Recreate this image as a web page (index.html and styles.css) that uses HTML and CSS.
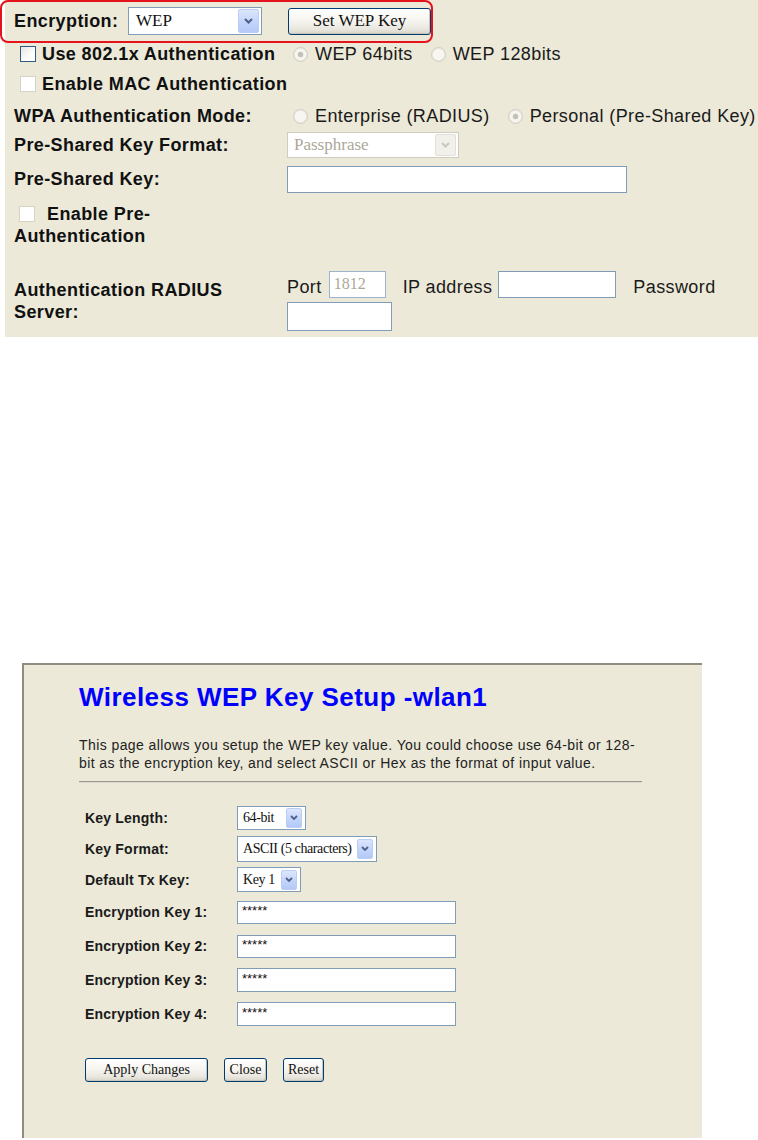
FILE: index.html
```html
<!DOCTYPE html>
<html lang="en">
<head>
<meta charset="utf-8">
<title>Wireless WEP Key Setup</title>
<link rel="stylesheet" href="styles.css">
</head>
<body>
<div class="page">
  <section class="sec-panel">
    <div class="row row-enc">
      <span class="lbl lbl-enc">Encryption:</span>
      <div class="sel sel-enc">
        <span class="sel-val">WEP</span>
        <span class="sel-btn"><svg width="9" height="6" viewBox="0 0 9 6"><path d="M1 1 L4.5 4.5 L8 1" fill="none" stroke="#4D6185" stroke-width="2"/></svg></span>
      </div>
      <button class="xpbtn btn-setkey" type="button">Set WEP Key</button>
    </div>

    <div class="grid2 row-8021x">
      <div class="cell-chk"><span class="chk chk-on"></span><span class="lbl">Use 802.1x Authentication</span></div>
      <div class="cell-ctl">
        <span class="radio checked"></span><span class="opt">WEP 64bits</span>
        <span class="radio radio-next"></span><span class="opt">WEP 128bits</span>
      </div>
    </div>

    <div class="row row-mac">
      <div class="cell-chk"><span class="chk"></span><span class="lbl">Enable MAC Authentication</span></div>
    </div>

    <div class="grid2 row-wpa">
      <span class="lbl">WPA Authentication Mode:</span>
      <div class="cell-ctl">
        <span class="radio"></span><span class="opt">Enterprise (RADIUS)</span>
        <span class="radio radio-next checked"></span><span class="opt">Personal (Pre-Shared Key)</span>
      </div>
    </div>

    <div class="grid2 row-pskfmt">
      <span class="lbl">Pre-Shared Key Format:</span>
      <div class="cell-ctl">
        <div class="sel sel-dis sel-fmt">
          <span class="sel-val">Passphrase</span>
          <span class="sel-btn"><svg width="9" height="6" viewBox="0 0 9 6"><path d="M1 1 L4.5 4.5 L8 1" fill="none" stroke="#C9C7BA" stroke-width="2"/></svg></span>
        </div>
      </div>
    </div>

    <div class="grid2 row-psk">
      <span class="lbl">Pre-Shared Key:</span>
      <div class="cell-ctl"><input class="txt txt-psk" type="text"></div>
    </div>

    <div class="row row-preauth">
      <div class="preauth lbl"><span class="chk chk-inline"></span>Enable Pre-Authentication</div>
    </div>

    <div class="grid2 row-radius">
      <span class="lbl lbl-radius">Authentication RADIUS Server:</span>
      <div class="radius-ctl">
        <span class="opt ctl-text">Port</span>
        <input class="txt txt-port" type="text" value="1812">
        <span class="opt ctl-text ctl-ip">IP address</span>
        <input class="txt txt-ip" type="text">
        <span class="opt ctl-text ctl-pw">Password</span>
        <input class="txt txt-pw" type="text">
      </div>
    </div>
  </section>

  <div class="annot"></div>

  <section class="wep-panel">
    <h1 class="wep-title">Wireless WEP Key Setup -wlan1</h1>
    <p class="wep-desc">This page allows you setup the WEP key value. You could choose use 64-bit or 128-bit as the encryption key, and select ASCII or Hex as the format of input value.</p>
    <div class="wep-rule"></div>

    <div class="wep-form">
      <span class="flbl">Key Length:</span>
      <div class="sel sel-sm sel-len">
        <span class="sel-val">64-bit</span>
        <span class="sel-btn"><svg width="8" height="5" viewBox="0 0 8 5"><path d="M1 1 L4 4 L7 1" fill="none" stroke="#4D6185" stroke-width="1.8"/></svg></span>
      </div>

      <span class="flbl">Key Format:</span>
      <div class="sel sel-sm sel-format">
        <span class="sel-val">ASCII (5 characters)</span>
        <span class="sel-btn"><svg width="8" height="5" viewBox="0 0 8 5"><path d="M1 1 L4 4 L7 1" fill="none" stroke="#4D6185" stroke-width="1.8"/></svg></span>
      </div>

      <span class="flbl">Default Tx Key:</span>
      <div class="sel sel-sm sel-tx">
        <span class="sel-val">Key 1</span>
        <span class="sel-btn"><svg width="8" height="5" viewBox="0 0 8 5"><path d="M1 1 L4 4 L7 1" fill="none" stroke="#4D6185" stroke-width="1.8"/></svg></span>
      </div>

      <span class="flbl">Encryption Key 1:</span>
      <input class="txt txt-key" type="text" value="*****">
      <span class="flbl">Encryption Key 2:</span>
      <input class="txt txt-key" type="text" value="*****">
      <span class="flbl">Encryption Key 3:</span>
      <input class="txt txt-key txt-key-tall" type="text" value="*****">
      <span class="flbl">Encryption Key 4:</span>
      <input class="txt txt-key txt-key-tall" type="text" value="*****">
    </div>

    <div class="wep-actions">
      <button class="xpbtn btn-apply" type="button">Apply Changes</button>
      <button class="xpbtn btn-close" type="button">Close</button>
      <button class="xpbtn btn-reset" type="button">Reset</button>
    </div>
  </section>
</div>
</body>
</html>
```

FILE: styles.css
```css
* { box-sizing: border-box; }

html, body {
  margin: 0;
  padding: 0;
  background: #ffffff;
}

body {
  font-family: "Liberation Sans", Arial, sans-serif;
  color: #111111;
}

.page {
  position: relative;
  width: 758px;
  height: 1140px;
  overflow: hidden;
}

/* ---------- top security panel ---------- */
.sec-panel {
  margin-left: 5px;
  width: 753px;
  height: 337px;
  background: #ECE9D8;
  padding-left: 9px;
}

.row { display: flex; align-items: center; }

.grid2 {
  display: grid;
  grid-template-columns: 273px 1fr;
  align-items: center;
}

.lbl {
  font-weight: bold;
  font-size: 18px;
  letter-spacing: 0.4px;
  color: #111;
}

.opt {
  font-size: 18px;
  letter-spacing: 0.4px;
  color: #1a1a1a;
  white-space: nowrap;
}

.row-enc { height: 42px; }
.row-8021x { height: 24px; }
.row-mac { height: 36px; }
.row-wpa { height: 28px; }
.row-pskfmt { height: 30px; }
.row-psk { height: 38px; }
.row-preauth { height: 54px; }
.row-radius { height: 85px; padding-top: 12px; }

.lbl-enc { width: 114px; }

.cell-chk {
  display: flex;
  align-items: center;
  padding-left: 6px;
}

.cell-ctl {
  display: flex;
  align-items: center;
  white-space: nowrap;
}

/* checkboxes */
.chk {
  display: inline-block;
  width: 16px;
  height: 16px;
  margin-right: 6px;
  background: #ffffff;
  border: 1px solid #D6D3C7;
  flex: none;
}

.chk-on {
  border-color: #2F5A84;
  background: linear-gradient(135deg, #E8E7E0 0%, #ffffff 70%);
}

.chk-inline {
  margin: 0 12px 0 5px;
  vertical-align: -2px;
}

/* radios */
.radio {
  display: inline-block;
  width: 15px;
  height: 15px;
  border-radius: 50%;
  border: 1px solid #D2CFC3;
  background: radial-gradient(circle, #F7F6F1 0 5px, #ECEAE1 6px);
  margin: 0 7px 0 6px;
  flex: none;
}

.radio.checked {
  background: radial-gradient(circle, #C4C1B6 0 2.5px, #F7F6F1 3.2px 5px, #ECEAE1 6px);
}

.radio-next { margin-left: 18px; }

/* selects */
.sel {
  display: flex;
  align-items: center;
  background: #ffffff;
  border: 1px solid #7F9DB9;
  font-family: "Liberation Serif", "Times New Roman", serif;
}

.sel-val {
  flex: 1;
  white-space: nowrap;
  overflow: hidden;
}

.sel-btn {
  flex: none;
  display: flex;
  align-items: center;
  justify-content: center;
  border: 1px solid #BCCDF5;
  border-radius: 2px;
  background: linear-gradient(#DCE6FD, #C1D3FB 60%, #B5C9F7);
}

.sel-enc {
  width: 134px;
  height: 28px;
  font-size: 17px;
  padding-right: 2px;
}

.sel-enc .sel-val { padding-left: 7px; }
.sel-enc .sel-btn { width: 21px; height: 24px; }

.sel-dis { border-color: #CFCCC0; }
.sel-dis .sel-val { color: #ACA899; }
.sel-dis .sel-btn {
  background: #F1F0EA;
  border-color: #E2E0D6;
}

.sel-fmt {
  width: 172px;
  height: 26px;
  font-size: 17px;
  padding-right: 2px;
}

.sel-fmt .sel-val { padding-left: 6px; }
.sel-fmt .sel-btn { width: 21px; height: 22px; }

/* text inputs */
.txt {
  display: block;
  margin: 0;
  background: #ffffff;
  border: 1px solid #7F9DB9;
  padding: 0 4px;
  font-family: "Liberation Serif", "Times New Roman", serif;
  color: #111;
  outline: none;
}

.txt-psk { width: 340px; height: 27px; }

/* buttons */
.xpbtn {
  margin: 0;
  padding: 0;
  border: 1px solid #003C74;
  border-radius: 3px;
  background: linear-gradient(#FFFFFF 0%, #F6F5F0 45%, #E9E7DF 80%, #D8D3C8 100%);
  font-family: "Liberation Serif", "Times New Roman", serif;
  color: #111;
  box-shadow: inset -1px -1px 0 #C9C4B8;
}

.btn-setkey {
  width: 143px;
  height: 27px;
  margin-left: 26px;
  font-size: 17px;
}

/* pre-auth */
.preauth {
  width: 170px;
  line-height: 22px;
}

/* radius row */
.lbl-radius { line-height: 22px; }

.radius-ctl {
  display: flex;
  flex-wrap: wrap;
  align-items: center;
  row-gap: 4px;
}

.ctl-text { margin-top: 6px; }
.ctl-ip { margin-left: 17px; }
.ctl-pw { margin-left: 17px; }

.txt-port {
  width: 57px;
  height: 27px;
  margin-left: 7px;
  font-size: 16px;
  color: #ACA899;
  border-color: #9FB4CB;
}

.txt-ip {
  width: 118px;
  height: 27px;
  margin-left: 6px;
}

.txt-pw {
  width: 105px;
  height: 29px;
}

/* annotation */
.annot {
  position: absolute;
  left: 0;
  top: 0;
  width: 433px;
  height: 43px;
  border: 2px solid #E5141C;
  border-radius: 8px;
}

/* ---------- WEP key setup panel ---------- */
.wep-panel {
  margin: 326px 0 0 22px;
  width: 680px;
  height: 475px;
  background: #ECE9D8;
  border-top: 2px solid #8F8C82;
  border-left: 2px solid #8F8C82;
  padding: 17px 0 0 55px;
}

.wep-title {
  margin: 0;
  font-size: 26px;
  line-height: 30px;
  font-weight: bold;
  letter-spacing: 0.45px;
  color: #0000FF;
}

.wep-desc {
  margin: 24px 0 0;
  width: 563px;
  font-size: 14px;
  line-height: 18px;
  letter-spacing: 0.42px;
  color: #222;
}

.wep-rule {
  margin-top: 9px;
  width: 563px;
  border-top: 1px solid #9C998E;
  border-bottom: 1px solid #DCDACF;
}

.wep-form {
  margin: 19px 0 0 6px;
  display: grid;
  grid-template-columns: 152px auto;
  grid-template-rows: 31px 31px 31px 34px 34px 34px 34px;
  align-items: center;
  justify-items: start;
}

.flbl {
  font-weight: bold;
  font-size: 14px;
  letter-spacing: 0.2px;
  color: #1a1a1a;
}

.sel-sm {
  font-size: 14px;
  padding-right: 3px;
}

.sel-sm .sel-val {
  padding-left: 5px;
  letter-spacing: -0.4px;
}

.sel-sm .sel-btn { width: 16px; height: 20px; }

.sel-len { width: 69px; height: 24px; }
.sel-format { width: 140px; height: 26px; }
.sel-tx { width: 64px; height: 25px; }

.txt-key {
  width: 219px;
  height: 23px;
  font-family: "Liberation Sans", Arial, sans-serif;
  font-size: 13px;
  padding: 0 4px 3px;
}

.txt-key-tall { height: 24px; }

.wep-actions {
  margin: 27px 0 0 6px;
  display: flex;
  gap: 16px;
}

.wep-actions .xpbtn {
  height: 24px;
  font-size: 14px;
}

.btn-apply { width: 123px; }
.btn-close { width: 43px; }
.btn-reset { width: 41px; }
```
